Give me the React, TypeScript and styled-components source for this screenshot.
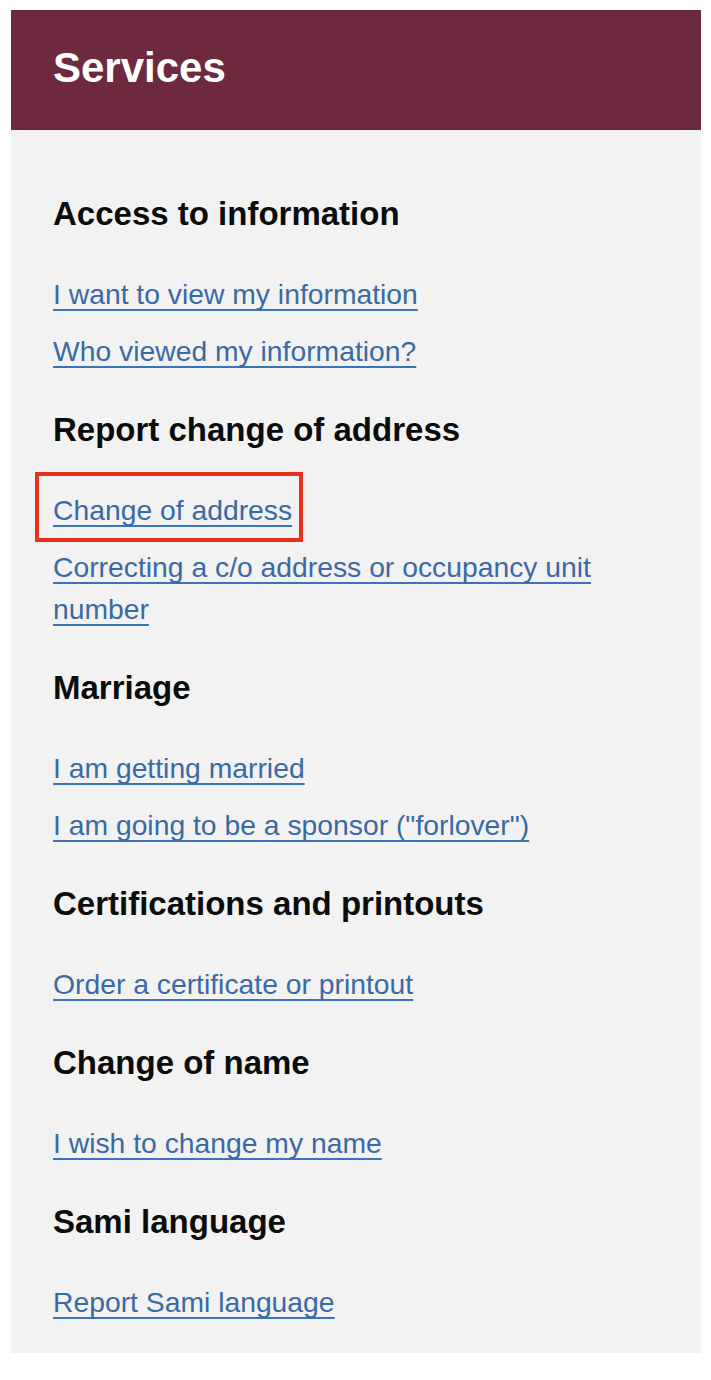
import React from "react";
import styled, { createGlobalStyle } from "styled-components";

const GlobalStyle = createGlobalStyle`
  html, body {
    margin: 0;
    padding: 0;
    background: #ffffff;
  }
  body {
    font-family: "Liberation Sans", Arial, sans-serif;
  }
`;

const Page = styled.div`
  padding: 10px 10px 28px 11px;
  width: 690px;
`;

const Panel = styled.section`
  background: #f2f2f2;
  display: flex;
  flex-direction: column;
`;

const Header = styled.header`
  background: #6d2a3e;
  height: 120px;
  box-sizing: border-box;
  padding: 34px 42px 0;
`;

const Title = styled.h2`
  margin: 0;
  color: #ffffff;
  font-size: 42px;
  line-height: 48px;
  font-weight: 700;
`;

const Body = styled.div`
  padding: 64px 42px 30px;
  display: flex;
  flex-direction: column;
  gap: 38px;
`;

const Section = styled.div`
  display: flex;
  flex-direction: column;
  gap: 39px;
`;

const Heading = styled.h3`
  margin: 0;
  color: #0b0c0c;
  font-size: 33px;
  line-height: 40px;
  font-weight: 700;
`;

const LinkList = styled.ul`
  list-style: none;
  margin: 0;
  padding: 0;
  display: flex;
  flex-direction: column;
  gap: 15px;
`;

const Item = styled.li<{ $highlight?: boolean }>`
  position: relative;
  font-size: 28.3px;
  line-height: 42px;
  ${(p) =>
    p.$highlight &&
    `
    align-self: flex-start;
    &::after {
      content: "";
      position: absolute;
      left: -18px;
      right: -11px;
      top: -17px;
      bottom: -11px;
      border: 4px solid #e6321c;
      pointer-events: none;
    }
  `}
`;

const Link = styled.a`
  color: #3a6aa3;
  text-decoration: underline;
  text-decoration-color: #3a74b8;
  text-decoration-thickness: 2px;
  text-underline-offset: 5px;
  text-decoration-skip-ink: none;
`;

type SectionData = { title: string; links: string[] };

const sections: SectionData[] = [
  {
    title: "Access to information",
    links: ["I want to view my information", "Who viewed my information?"],
  },
  {
    title: "Report change of address",
    links: [
      "Change of address",
      "Correcting a c/o address or occupancy unit number",
    ],
  },
  {
    title: "Marriage",
    links: ["I am getting married", 'I am going to be a sponsor ("forlover")'],
  },
  {
    title: "Certifications and printouts",
    links: ["Order a certificate or printout"],
  },
  { title: "Change of name", links: ["I wish to change my name"] },
  { title: "Sami language", links: ["Report Sami language"] },
];

export default function App() {
  return (
    <>
      <GlobalStyle />
      <Page>
        <Panel>
          <Header>
            <Title>Services</Title>
          </Header>
          <Body>
            {sections.map((s) => (
              <Section key={s.title}>
                <Heading>{s.title}</Heading>
                <LinkList>
                  {s.links.map((l) => (
                    <Item key={l} $highlight={l === "Change of address"}>
                      <Link href="#">{l}</Link>
                    </Item>
                  ))}
                </LinkList>
              </Section>
            ))}
          </Body>
        </Panel>
      </Page>
    </>
  );
}
